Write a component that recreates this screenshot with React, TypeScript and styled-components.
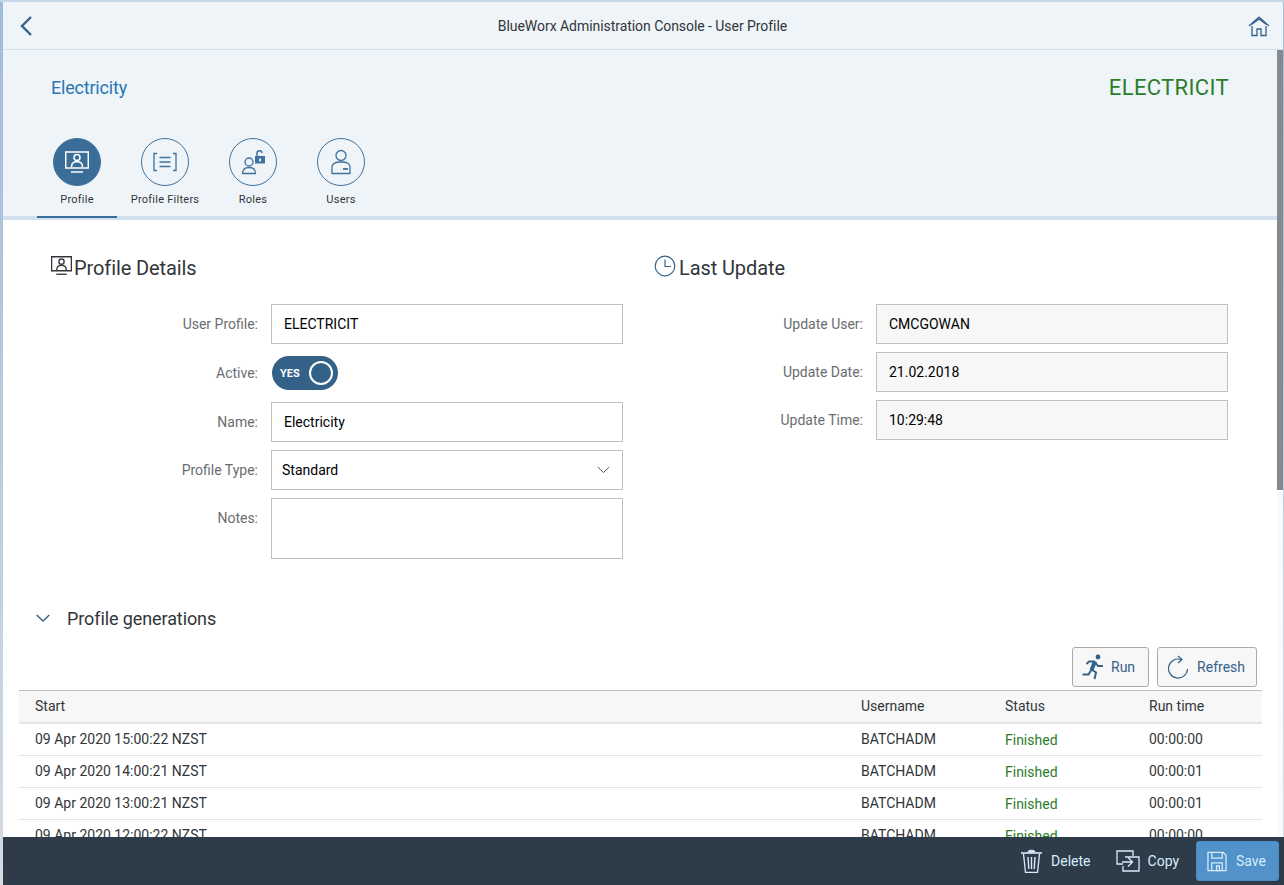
import React from "react";
import styled, { createGlobalStyle } from "styled-components";

const Global = createGlobalStyle`
  html, body { margin: 0; padding: 0; height: 100%; overflow: hidden; background: #fff; }
  #root { height: 885px; }
  * { box-sizing: border-box; }
`;

const Frame = styled.div`
  position: relative;
  height: 885px;
  width: 1284px;
  display: flex;
  flex-direction: column;
  padding-left: 3px;
  border-top: 2px solid #c6d7e9;
  background: linear-gradient(to bottom, #9fbbdb 0, #d5dbe1 100%);
  font-family: Roboto, "Liberation Sans", sans-serif;
  color: #32363a;
  overflow: hidden;
  &::after {
    content: "";
    position: absolute;
    top: 0;
    right: 0;
    bottom: 48px;
    width: 1px;
    background: linear-gradient(to bottom, #9fbbdb 0, #d5dbe1 100%);
  }
`;
const Shell = styled.header`
  flex: 0 0 48px;
  display: flex;
  align-items: center;
  justify-content: center;
  position: relative;
  background: #eff4f9;
  border-bottom: 1px solid #d1dfec;
  font-size: 14px;
  padding: 1px 2px 0 0;
  letter-spacing: -0.05px;
`;
const IconSlot = styled.span<{ $side: "left" | "right" }>`
  position: absolute;
  top: 13px;
  ${(p) => (p.$side === "left" ? "left: 16px;" : "right: 13px;")}
  display: flex;
`;
const Body = styled.div`
  flex: 1;
  min-height: 0;
  position: relative;
  overflow: hidden;
  display: flex;
  flex-direction: column;
  background: #fff;
`;
const ObjectHeader = styled.section`
  flex: 0 0 170px;
  background: #eff4f9;
  border-bottom: 4px solid #d1e0ef;
  display: flex;
  flex-direction: column;
`;
const TitleRow = styled.div`
  display: flex;
  justify-content: space-between;
  align-items: flex-start;
  padding: 26px 55px 0 48px;
  height: 88px;
`;
const Title = styled.h1`
  margin: 0;
  font-size: 18px;
  line-height: 24px;
  font-weight: 400;
  color: #2a76b3;
  letter-spacing: -0.2px;
`;
const Code = styled.div`
  font-size: 22px;
  line-height: 24px;
  color: #2b7d2b;
  letter-spacing: 0.35px;
`;
const Tabs = styled.nav`
  display: flex;
  padding-left: 34px;
  height: 78px;
`;
const Tab = styled.div<{ $w: number; $on?: boolean }>`
  width: ${(p) => p.$w}px;
  display: flex;
  flex-direction: column;
  align-items: center;
  position: relative;
  &::after {
    content: "";
    display: ${(p) => (p.$on ? "block" : "none")};
    position: absolute;
    left: 0;
    right: 0;
    bottom: -2px;
    height: 2px;
    background: #3b6d99;
  }
`;
const TabCircle = styled.div<{ $on?: boolean }>`
  width: 48px;
  height: 48px;
  border-radius: 50%;
  border: 1px solid #3f729e;
  background: ${(p) => (p.$on ? "#3b6d99" : "transparent")};
  color: ${(p) => (p.$on ? "#fff" : "#3f729e")};
  display: flex;
  align-items: center;
  justify-content: center;
`;
const TabLabel = styled.div`
  margin-top: 7px;
  font-size: 11px;
  line-height: 14px;
  color: #32363a;
  white-space: nowrap;
  letter-spacing: 0.25px;
`;
const Forms = styled.section`
  display: grid;
  grid-template-columns: 605px 605px;
  padding: 34px 0 0 48px;
  height: 387px;
  flex: none;
`;
const FormColumn = styled.div`
  display: flex;
  flex-direction: column;
`;
const Heading = styled.h2`
  margin: 0 0 22px;
  height: 28px;
  display: flex;
  align-items: center;
  gap: 2px;
  font-size: 20px;
  font-weight: 400;
  color: #32363a;
  letter-spacing: -0.1px;
`;
const HeadingIcon = styled.span`
  color: #32363a;
  display: flex;
  margin-top: -5px;
`;
const Row = styled.div<{ $h?: number }>`
  display: grid;
  grid-template-columns: 207px 352px;
  column-gap: 13px;
  align-items: center;
  margin-bottom: 8px;
  height: ${(p) => p.$h ?? 40}px;
`;
const Label = styled.label<{ $top?: boolean }>`
  text-align: right;
  font-size: 14px;
  color: #6a6d70;
  align-self: ${(p) => (p.$top ? "start" : "center")};
  ${(p) => (p.$top ? "padding-top: 12px;" : "")}
`;
const Field = styled.div<{ $ro?: boolean; $h?: number }>`
  height: ${(p) => p.$h ?? 40}px;
  border: 1px solid #bfbfbf;
  background: ${(p) => (p.$ro ? "#f7f7f7" : "#fff")};
  padding: 0 12px;
  display: flex;
  align-items: center;
  justify-content: space-between;
  font-size: 14px;
  color: #000;
`;
const SelectText = styled.span`
  margin-left: -2px;
`;
const Toggle = styled.div`
  margin-left: 1px;
  width: 66px;
  height: 34px;
  border-radius: 17px;
  background: #346187;
  display: flex;
  align-items: center;
  justify-content: space-between;
  padding: 0 5px 0 8px;
  color: #fff;
  font-size: 11px;
  font-weight: 700;
`;
const Knob = styled.span`
  width: 24px;
  height: 24px;
  border: 2px solid #fff;
  border-radius: 50%;
`;
const Section = styled.section`
  flex: none;
  padding-left: 16px;
  padding-right: 22px;
`;
const PanelTitle = styled.div`
  display: flex;
  align-items: center;
  gap: 17px;
  height: 24px;
  margin-top: -1px;
  font-size: 18px;
  letter-spacing: -0.1px;
  color: #32363a;
  padding-left: 17px;
`;
const Toolbar = styled.div`
  display: flex;
  justify-content: flex-end;
  gap: 8px;
  margin-top: 17px;
  padding-right: 5px;
  margin-bottom: 3px;
`;
const ToolButton = styled.button<{ $gap?: number; $pr?: number }>`
  height: 40px;
  display: flex;
  align-items: center;
  gap: ${(p) => p.$gap ?? 8}px;
  padding: 0 ${(p) => p.$pr ?? 11}px 0 9px;
  background: #f7f7f7;
  border: 1px solid #ababab;
  border-radius: 3px;
  color: #346187;
  font: inherit;
  font-size: 14px;
`;
const Table = styled.div`
  font-size: 14px;
`;
const TableRow = styled.div<{ $head?: boolean }>`
  display: grid;
  grid-template-columns: 826px 144px 144px 128px;
  height: ${(p) => (p.$head ? 34 : 32)}px;
  align-items: center;
  background: ${(p) => (p.$head ? "#f7f7f7" : "#fff")};
  border-bottom: ${(p) => (p.$head ? "2px solid #e5e5e5" : "1px solid #e5e5e5")};
  ${(p) => (p.$head ? "border-top: 1px solid #bfbfbf;" : "")}
`;
const Cell = styled.div<{ $ok?: boolean }>`
  padding-left: 16px;
  padding-bottom: ${(p) => (p.$ok ? 0 : 2)}px;
  color: ${(p) => (p.$ok ? "#2b7d2b" : "#32363a")};
`;
const Scrollbar = styled.div`
  position: absolute;
  top: 0;
  right: 0;
  bottom: 0;
  width: 7px;
  background: #fafafa;
`;
const Thumb = styled.div`
  height: 440px;
  width: 6px;
  background: #868a8d;
`;
const Footer = styled.footer`
  position: absolute;
  left: 0;
  right: 0;
  bottom: 0;
  height: 48px;
  background: #2e3c4a;
  display: flex;
  justify-content: flex-end;
  align-items: center;
  padding-right: 5px;
  gap: 4px;
`;
const FooterButton = styled.button<{ $primary?: boolean; $pr?: number; $gap?: number }>`
  height: 40px;
  display: flex;
  align-items: center;
  gap: ${(p) => p.$gap ?? 9}px;
  padding: 0 ${(p) => p.$pr ?? 12}px 0 10px;
  border: ${(p) => (p.$primary ? "1px solid #4a8bc2" : "none")};
  border-radius: 3px;
  background: ${(p) => (p.$primary ? "#5092c9" : "transparent")};
  color: #d8ecfb;
  font: inherit;
  font-size: 14px;
`;

const stroke = { fill: "none", stroke: "currentColor", strokeWidth: 1.3 } as const;

const Back = () => (
  <svg width="14" height="22" viewBox="0 0 14 22" style={{ color: "#346187" }}>
    <path d="M12 2 L3 11 L12 20" fill="none" stroke="currentColor" strokeWidth="2.4" />
  </svg>
);
const Home = () => (
  <svg width="24" height="22" viewBox="0 0 24 22" style={{ color: "#346187" }}>
    <path d="M2 11 L12 2 L22 11 M4.5 9.5 L12 4 L19.5 9.5" {...stroke} />
    <path d="M5 11 V20.5 H10 V14 H14 V20.5 H19 V11" {...stroke} />
  </svg>
);
const Monitor = ({ size = 24 }: { size?: number }) => (
  <svg width={size} height={size} viewBox="0 0 24 24">
    <path d="M0.7 2 H23.3 V18 H0.7 Z" fill="none" stroke="currentColor" strokeWidth="1.5" />
    <circle cx="12" cy="7.6" r="3" fill="none" stroke="currentColor" strokeWidth="1.5" />
    <path d="M6.5 17 C6.5 13 9 11.8 12 11.8 C15 11.8 17.5 13 17.5 17" fill="none" stroke="currentColor" strokeWidth="1.5" />
    <path d="M6 22 H18" stroke="currentColor" strokeWidth="1.5" />
  </svg>
);
const Filters = () => (
  <svg width="24" height="20" viewBox="0 0 24 20">
    <path d="M4 1.5 H1 V18.5 H4 M20 1.5 H23 V18.5 H20" {...stroke} />
    <path d="M6.5 5.5 H17.5 M6.5 10 H17.5 M6.5 14.5 H17.5" {...stroke} />
  </svg>
);
const Roles = () => (
  <svg width="26" height="26" viewBox="0 0 26 26">
    <circle cx="9" cy="13" r="4" {...stroke} />
    <path d="M2.5 24.5 C2.5 20 5 18.5 9 18.5 C13 18.5 15.5 20 15.5 24.5 Z" {...stroke} />
    <rect x="15" y="7" width="10" height="7.5" fill="currentColor" />
    <path d="M17 7 V4 C17 1 22 1 22 4" fill="none" stroke="currentColor" strokeWidth="1.5" />
    <rect x="19.2" y="9.5" width="1.8" height="3" fill="#eff4f9" />
  </svg>
);
const Users = () => (
  <svg width="22" height="26" viewBox="0 0 22 26">
    <circle cx="11" cy="6.5" r="5" {...stroke} />
    <path d="M2 24.5 V18 C2 14.5 5 13 11 13 C17 13 20 14.5 20 18 V24.5 Z" {...stroke} />
    <path d="M13 20 H18" stroke="currentColor" strokeWidth="1.8" />
  </svg>
);
const Clock = () => (
  <svg width="22" height="22" viewBox="0 0 22 22" style={{ color: "#346187", marginLeft: -2, marginRight: 1, marginTop: -5 }}>
    <circle cx="11" cy="11" r="9.8" fill="none" stroke="currentColor" strokeWidth="1.2" />
    <path d="M11 4.5 V11.5 H17" fill="none" stroke="currentColor" strokeWidth="1.2" />
  </svg>
);
const ChevronDown = ({ w, color, sw }: { w: number; color: string; sw: number }) => (
  <svg width={w} height={w * 0.6} viewBox="0 0 20 12">
    <path d="M1 1.5 L10 10 L19 1.5" fill="none" stroke={color} strokeWidth={sw} />
  </svg>
);
const Runner = () => (
  <svg width="22" height="26" viewBox="0 0 22 26">
    <circle cx="16" cy="3" r="2.4" fill="currentColor" />
    <path d="M13 7.5 L9.5 16" fill="none" stroke="currentColor" strokeWidth="4" />
    <path d="M13 7.5 H7 L4.5 10" fill="none" stroke="currentColor" strokeWidth="1.8" />
    <path d="M13 8 L16 12 H21" fill="none" stroke="currentColor" strokeWidth="1.8" />
    <path d="M9.5 15.5 L6.5 20.5 H0.5" fill="none" stroke="currentColor" strokeWidth="2" />
    <path d="M9.5 15.5 L14 18.5 L12.5 25" fill="none" stroke="currentColor" strokeWidth="2" />
  </svg>
);
const Refresh = () => (
  <svg width="22" height="24" viewBox="0 0 22 24">
    <path d="M14 4.5 A9.5 9.5 0 1 0 20.5 14" fill="none" stroke="currentColor" strokeWidth="1.2" />
    <path d="M11 1 L15 4.5 L11 8" fill="none" stroke="currentColor" strokeWidth="1.2" />
  </svg>
);
const Trash = () => (
  <svg width="21" height="24" viewBox="0 0 21 24">
    <path d="M7 3 C7 0.6 14 0.6 14 3 Z" fill="currentColor" stroke="currentColor" />
    <path d="M0 4 H21" stroke="currentColor" strokeWidth="1.6" />
    <path d="M2.5 5 L4.5 23.3 H16.5 L18.5 5" fill="none" stroke="currentColor" strokeWidth="1.3" />
    <path d="M7 8 L7.8 20 M10.5 8 V20 M14 8 L13.2 20" fill="none" stroke="currentColor" strokeWidth="1.4" />
  </svg>
);
const Copy = () => (
  <svg width="24" height="22" viewBox="0 0 24 22">
    <path d="M7 14 H1 V1 H17 V6" fill="none" stroke="currentColor" strokeWidth="1.3" />
    <path d="M7 16 V21 H23 V7 H9" fill="none" stroke="currentColor" strokeWidth="1.3" />
    <path d="M6 12 H16 M12 7.5 L16.5 12 L12 16.5" fill="none" stroke="currentColor" strokeWidth="1.3" />
  </svg>
);
const Disk = () => (
  <svg width="20" height="21" viewBox="0 0 21 21">
    <path d="M1 1 H17 L20 4 V20 H1 Z" fill="none" stroke="currentColor" strokeWidth="1.3" />
    <path d="M5 1 V7 H16 V1" fill="none" stroke="currentColor" strokeWidth="1.3" />
    <path d="M5 20 V12 H16 V20 M10 15 H13 V20 H10 Z" fill="none" stroke="currentColor" strokeWidth="1.3" />
  </svg>
);

const rows = [
  ["09 Apr 2020 15:00:22 NZST", "00:00:00"],
  ["09 Apr 2020 14:00:21 NZST", "00:00:01"],
  ["09 Apr 2020 13:00:21 NZST", "00:00:01"],
  ["09 Apr 2020 12:00:22 NZST", "00:00:00"],
];

export default function App() {
  return (
    <Frame>
      <Global />
      <Shell>
        <IconSlot $side="left"><Back /></IconSlot>
        BlueWorx Administration Console - User Profile
        <IconSlot $side="right"><Home /></IconSlot>
      </Shell>
      <Body>
        <ObjectHeader>
          <TitleRow>
            <Title>Electricity</Title>
            <Code>ELECTRICIT</Code>
          </TitleRow>
          <Tabs>
            <Tab $w={80} $on>
              <TabCircle $on><Monitor /></TabCircle>
              <TabLabel>Profile</TabLabel>
            </Tab>
            <Tab $w={96}>
              <TabCircle><Filters /></TabCircle>
              <TabLabel>Profile Filters</TabLabel>
            </Tab>
            <Tab $w={80}>
              <TabCircle><Roles /></TabCircle>
              <TabLabel>Roles</TabLabel>
            </Tab>
            <Tab $w={96}>
              <TabCircle><Users /></TabCircle>
              <TabLabel>Users</TabLabel>
            </Tab>
          </Tabs>
        </ObjectHeader>
        <Forms>
          <FormColumn>
            <Heading>
              <HeadingIcon><Monitor size={21} /></HeadingIcon>
              Profile Details
            </Heading>
            <Row>
              <Label>User Profile:</Label>
              <Field>ELECTRICIT</Field>
            </Row>
            <Row $h={42}>
              <Label>Active:</Label>
              <Toggle>YES<Knob /></Toggle>
            </Row>
            <Row>
              <Label>Name:</Label>
              <Field>Electricity</Field>
            </Row>
            <Row>
              <Label>Profile Type:</Label>
              <Field>
                <SelectText>Standard</SelectText>
                <ChevronDown w={13} color="#32363a" sw={1.3} />
              </Field>
            </Row>
            <Row $h={61}>
              <Label $top>Notes:</Label>
              <Field $h={61} />
            </Row>
          </FormColumn>
          <FormColumn>
            <Heading>
              <Clock />
              Last Update
            </Heading>
            <Row>
              <Label>Update User:</Label>
              <Field $ro>CMCGOWAN</Field>
            </Row>
            <Row>
              <Label>Update Date:</Label>
              <Field $ro>21.02.2018</Field>
            </Row>
            <Row>
              <Label>Update Time:</Label>
              <Field $ro>10:29:48</Field>
            </Row>
          </FormColumn>
        </Forms>
        <Section>
          <PanelTitle>
            <ChevronDown w={14} color="#346187" sw={2} />
            Profile generations
          </PanelTitle>
          <Toolbar>
            <ToolButton $gap={7} $pr={13}><Runner />Run</ToolButton>
            <ToolButton><Refresh />Refresh</ToolButton>
          </Toolbar>
          <Table>
            <TableRow $head>
              <Cell>Start</Cell>
              <Cell>Username</Cell>
              <Cell>Status</Cell>
              <Cell>Run time</Cell>
            </TableRow>
            {rows.map(([start, time]) => (
              <TableRow key={start}>
                <Cell>{start}</Cell>
                <Cell>BATCHADM</Cell>
                <Cell $ok>Finished</Cell>
                <Cell>{time}</Cell>
              </TableRow>
            ))}
          </Table>
        </Section>
        <Scrollbar><Thumb /></Scrollbar>
        <Footer>
          <FooterButton $pr={11}><Trash />Delete</FooterButton>
          <FooterButton $pr={13} $gap={8}><Copy />Copy</FooterButton>
          <FooterButton $primary><Disk />Save</FooterButton>
        </Footer>
      </Body>
    </Frame>
  );
}
